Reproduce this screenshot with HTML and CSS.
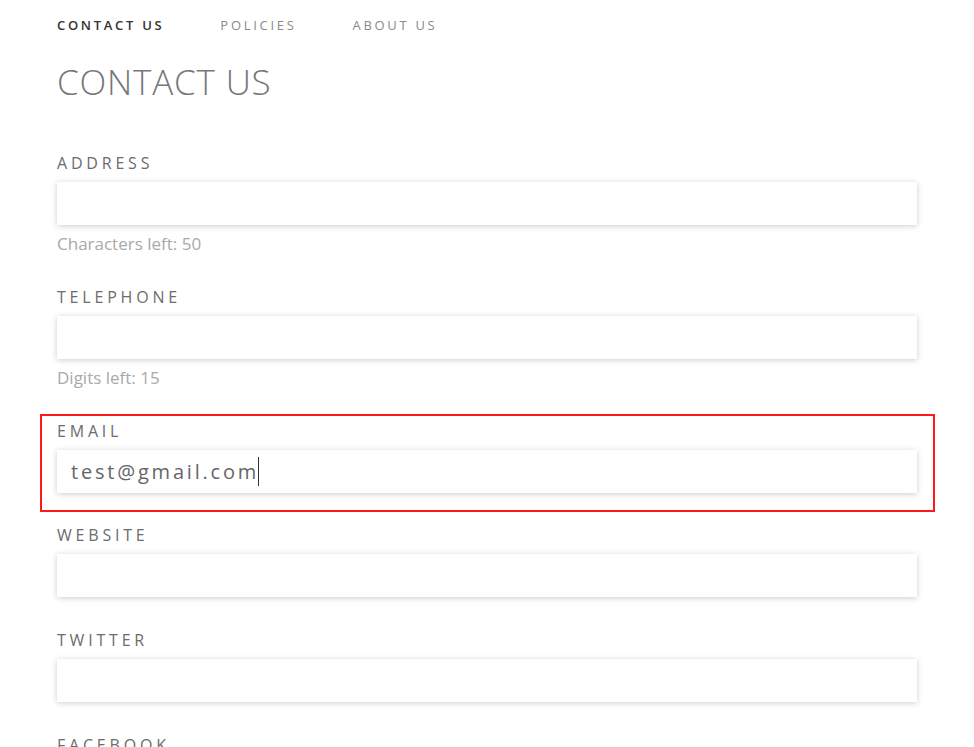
FILE: index.html
```html
<!DOCTYPE html>
<html lang="en">
<head>
<meta charset="utf-8">
<title>Contact Us</title>
<link rel="stylesheet" href="styles.css">
</head>
<body>
<div class="page">
  <nav class="nav">
    <a class="nav-item active">CONTACT US</a>
    <a class="nav-item">POLICIES</a>
    <a class="nav-item">ABOUT US</a>
  </nav>
  <h1 class="title">CONTACT US</h1>
  <div class="form">
    <div class="field">
      <div class="label">ADDRESS</div>
      <div class="input"></div>
      <div class="helper">Characters left: 50</div>
    </div>
    <div class="field">
      <div class="label">TELEPHONE</div>
      <div class="input"></div>
      <div class="helper">Digits left: 15</div>
    </div>
    <div class="highlight">
      <div class="field field-inner">
        <div class="label">EMAIL</div>
        <div class="input"><span class="value">test@gmail.com</span><span class="caret"></span></div>
      </div>
    </div>
    <div class="field">
      <div class="label">WEBSITE</div>
      <div class="input"></div>
    </div>
    <div class="field">
      <div class="label">TWITTER</div>
      <div class="input"></div>
    </div>
    <div class="field">
      <div class="label">FACEBOOK</div>
      <div class="input"></div>
    </div>
  </div>
</div>
</body>
</html>
```
FILE: styles.css
```css
html, body {
  margin: 0;
  padding: 0;
  background: #fff;
  overflow: hidden;
}
body {
  font-family: "Open Sans", "Liberation Sans", sans-serif;
  color: #666;
}
.page {
  padding: 0 57px;
}
.nav {
  display: flex;
  gap: 56px;
  padding-top: 16px;
  line-height: 18px;
}
.nav-item {
  font-size: 13px;
  letter-spacing: 2.7px;
  color: #8a8a8a;
}
.nav-item.active {
  color: #333;
  font-weight: 600;
}
.title {
  margin: 28px 0 0;
  font-size: 35px;
  line-height: 40px;
  font-weight: 300;
  color: #777;
  letter-spacing: 0.8px;
}
.form {
  display: flex;
  flex-direction: column;
  margin-top: 51px;
}
.field {
  margin-bottom: 33px;
}
.label {
  font-size: 16px;
  line-height: 20px;
  letter-spacing: 3.8px;
  color: #6c6c6c;
  margin-bottom: 9px;
}
.input {
  height: 43px;
  background: #fff;
  box-shadow: 0 1px 6px rgba(0, 0, 0, 0.2);
  display: flex;
  align-items: center;
  padding-left: 14px;
  box-sizing: border-box;
}
.helper {
  margin-top: 8px;
  font-size: 17px;
  line-height: 21px;
  color: #a9a9a9;
}
.highlight {
  margin: -7px -18px 13px -17px;
  padding: 5px 16px 17px 15px;
  border: 2px solid #ff1a1a;
}
.field-inner {
  margin-bottom: 0;
}
.value {
  font-size: 20px;
  letter-spacing: 2.8px;
  color: #666;
  line-height: 28px;
}
.caret {
  display: inline-block;
  width: 1px;
  height: 29px;
  background: #333;
  margin-left: -1px;
}
```
